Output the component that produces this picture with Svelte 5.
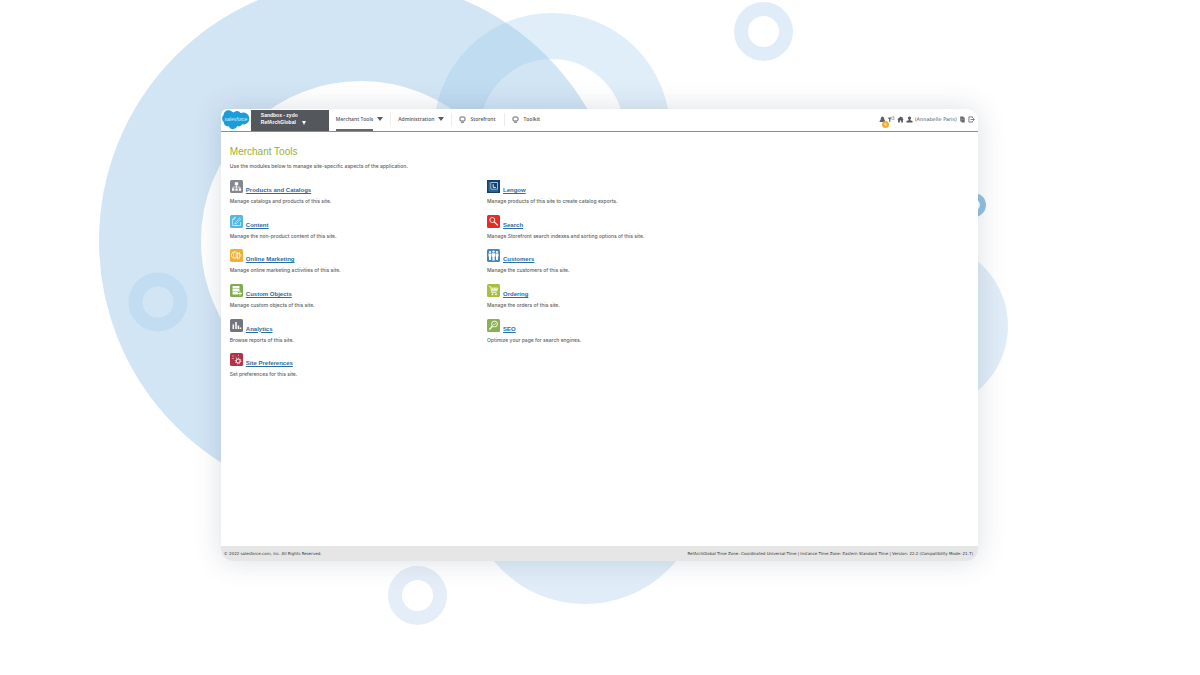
<script>
  const modules = [
    { name: 'Products and Catalogs', text: 'Manage catalogs and products of this site.', icon: 'catalog', color: '#85868f' },
    { name: 'Lengow', text: 'Manage products of this site to create catalog exports.', icon: 'lengow', color: '#173f6b' },
    { name: 'Content', text: 'Manage the non-product content of this site.', icon: 'content', color: '#55b7e3' },
    { name: 'Search', text: 'Manage Storefront search indexes and sorting options of this site.', icon: 'search', color: '#e52d27' },
    { name: 'Online Marketing', text: 'Manage online marketing activities of this site.', icon: 'marketing', color: '#f0b036' },
    { name: 'Customers', text: 'Manage the customers of this site.', icon: 'customers', color: '#4688bd' },
    { name: 'Custom Objects', text: 'Manage custom objects of this site.', icon: 'objects', color: '#7fae4e' },
    { name: 'Ordering', text: 'Manage the orders of this site.', icon: 'cart', color: '#a9bf3d' },
    { name: 'Analytics', text: 'Browse reports of this site.', icon: 'analytics', color: '#74747f' },
    { name: 'SEO', text: 'Optimize your page for search engines.', icon: 'seo', color: '#8bb04f' },
    { name: 'Site Preferences', text: 'Set preferences for this site.', icon: 'preferences', color: '#b03347' }
  ];
</script>

<div class="stage">
  <svg class="rings" viewBox="0 0 1200 675" preserveAspectRatio="xMidYMid slice" aria-hidden="true">
    <circle cx="361" cy="241" r="211" stroke-width="102" stroke="#d2e5f5" />
    <circle cx="552" cy="131" r="95" stroke-width="46" stroke="#9dcbea" stroke-opacity=".32" />
    <circle cx="763.5" cy="31.5" r="22.5" stroke-width="14" stroke="#e0edf8" />
    <circle cx="158" cy="302" r="22.5" stroke-width="14" stroke="#c2ddf1" />
    <circle cx="417.5" cy="595.5" r="22.5" stroke-width="14" stroke="#e5eef8" />
    <circle cx="585" cy="486" r="95" stroke-width="46" stroke="#e0edf8" />
    <circle cx="924" cy="326" r="68" stroke-width="32" stroke="#e0edf8" />
    <circle cx="974" cy="205" r="9" stroke-width="6" stroke="#94c2e1" />
  </svg>

  <div class="window">
    <header>
      <a class="logo" href="#home" aria-label="salesforce">
        <svg viewBox="0 0 28 20" width="28" height="20">
          <path fill="#1a9dd9" d="M11.6 2.6C13.5.2 17 .3 18.6 3c4-1.8 8.7 1 8.7 5.4 0 4-3.5 6.6-7.2 5.9-.9 1.8-2.9 2.6-4.8 1.8-1.4 3.7-6.7 4.4-8.5.2C3.8 17 1.500 14.500 2 12.200-.3 10.500-.5 7 1.700 5.100 1.200 1.200 6.500-1.300 9.500 1.200c.8.4 1.500.9 2.100 1.400z" />
          <text x="14" y="10.5" text-anchor="middle" fill="#d9f0fb" font-size="5" font-style="italic" font-family="Liberation Sans, sans-serif">salesforce</text>
        </svg>
      </a>
      <button class="site" type="button">
        <span>Sandbox - zydo</span>
        <span class="line">RefArchGlobal <i class="caret small"></i></span>
      </button>
      <nav>
        <button type="button" class="item"><span class="label current">Merchant Tools</span><i class="caret"></i></button>
        <button type="button" class="item"><span class="label">Administration</span><i class="caret"></i></button>
        <a class="item link" href="#storefront">
          <svg viewBox="0 0 7 7" width="7" height="7"><rect x="1" y="1" width="5" height="4" rx="1" fill="none" stroke="#666" /><path d="M2 6.300h3" stroke="#777" /></svg>
          <span class="label">Storefront</span>
        </a>
        <a class="item link" href="#toolkit">
          <svg viewBox="0 0 7 7" width="7" height="7"><rect x="1" y="1" width="5" height="4" rx="1" fill="none" stroke="#666" /><path d="M2 6.300h3" stroke="#777" /></svg>
          <span class="label">Toolkit</span>
        </a>
      </nav>
      <div class="tools">
        <button type="button" class="bell" aria-label="Notifications">
          <svg viewBox="0 0 7 7" width="7" height="7"><path fill="#5c5d66" d="M3.500.4C1.900.8 1.700 2 1.700 3.500L.6 5.200v.7h5.800v-.7L5.300 3.500C5.300 2 5.100.8 3.500.4z" /></svg>
          <span class="badge"><svg viewBox="0 0 7 7" width="7" height="7"><circle cx="3.500" cy="3.500" r="3.500" fill="#f4b02c" /><path d="M3 2v2h2" fill="none" stroke="#fff" stroke-width=".7" /></svg></span>
        </button>
        <button type="button" aria-label="Announcements">
          <svg viewBox="0 0 7 7" width="7" height="7"><path fill="#5c5d66" d="M.3 1.500l2.700 0v1.300h-.6L2.200 6H1.300L1.100 2.800H.3z" /><path d="M3 1.500L5.900.6v3.200L3 2.800" fill="none" stroke="#8b8ca0" stroke-width=".7" /></svg>
        </button>
        <a href="#home" aria-label="Home">
          <svg viewBox="0 0 7 7" width="7" height="7"><path fill="#55565c" d="M3.500.5L.2 3.600h.9v2.900h1.700V4.500h1.400v2h1.700V3.600h.9L5.500 2.300V1h-.8v.6z" /></svg>
        </a>
        <a class="user" href="#profile">
          <svg viewBox="0 0 7 7" width="7" height="7"><circle cx="3.500" cy="2" r="1.600" fill="#55565c" /><path fill="#55565c" d="M2.800 3h1.400v1.200l2.300.8v1.500h-6V5l2.300-.8z" /></svg>
          <span>(Annabelle Paris)</span>
        </a>
        <button type="button" aria-label="Documentation">
          <svg viewBox="0 0 7 7" width="7" height="7"><path fill="#66676d" d="M1.200.6h3.300v.9h1.200v4.900H2.500v-.9H1.200z" /><path d="M2.400 1.800v3.400M3 3.500h2" stroke="#c3c3c8" stroke-width=".4" /></svg>
        </button>
        <button type="button" aria-label="Log out">
          <svg viewBox="0 0 7 7" width="7" height="7"><path d="M4.500 2V.9H.9v5.200h3.600V5M2.500 3.500h3.800M5 2.200l1.400 1.300L5 4.800" fill="none" stroke="#66676d" stroke-width=".8" /></svg>
        </button>
      </div>
    </header>

    <main>
      <h1>Merchant Tools</h1>
      <p class="intro">Use the modules below to manage site-specific aspects of the application.</p>
      <div class="modules">
        {#each modules as m}
          <section>
            <div class="title">
              <svg viewBox="0 0 13 13" width="13" height="13" fill="none" stroke="#fff" aria-hidden="true">
                <rect width="13" height="13" rx={m.icon === 'lengow' ? 0 : 1.500} fill={m.color} stroke="none" />
                {#if m.icon === 'catalog'}
                  <path d="M6.500 5v3M3 9V7h7v2" stroke-width=".7" />
                  <path fill="#fff" stroke="none" d="M4.800 2.300h3.400v3H4.800zM2 8.500h2.300v2.200H2zM5.400 8.500h2.300v2.200H5.400zM8.800 8.500h2.300v2.200H8.800z" />
                {:else if m.icon === 'lengow'}
                  <path d="M2.200 1.500v9.500H11" stroke="#3e9bc9" stroke-width=".8" />
                  <path d="M3.800 2.500h6.700v6.700H3.800z" stroke="#a8d6ec" stroke-width=".9" />
                  <path d="M6.200 4.200v3.200h2.600" stroke-width=".9" />
                {:else if m.icon === 'content'}
                  <path d="M6 2.500H4L2.500 4.500v6h8V7M2.500 4.500H4.500v-2" stroke="#c8ebfa" stroke-width=".8" />
                  <path d="M5 8L9.500 3l1.200 1L6.500 8.600 4.700 9zM4.500 10.500h4" stroke="#e4f6fd" stroke-width=".6" />
                {:else if m.icon === 'search'}
                  <circle cx="5.300" cy="5" r="2.500" stroke-width=".9" />
                  <path d="M7.200 6.900l3.600 3.500" stroke-width="1.200" />
                {:else if m.icon === 'marketing'}
                  <circle cx="4.700" cy="6" r="3.300" stroke-width=".7" />
                  <path d="M4.700 2.700c-1.800 2-1.800 4.600 0 6.600M6 5.200l3.500-1.700v6L6 7.500zM7 8l1 2.500" stroke-width=".7" />
                  <path d="M9.700 5.200c1.600.2 1.600 2.200 0 2.500" stroke-width=".7" />
                {:else if m.icon === 'customers'}
                  <g fill="#fff" stroke="none">
                    <circle cx="3" cy="3" r="1.100" /><circle cx="6.500" cy="2.600" r="1.200" /><circle cx="10" cy="3" r="1.100" />
                    <path d="M1.500 4.500h3v3H4v3.500H2V7.500h-.5zM5 4.200h3v3.500h-.4v3.800H5.400V7.700H5zM8.500 4.500h3v3H11v3.500H9V7.500h-.5z" />
                  </g>
                {:else if m.icon === 'objects'}
                  <rect x="2.500" y="2" width="7" height="2.500" rx=".5" fill="#fff" stroke="none" />
                  <rect x="2.500" y="5" width="7" height="2.500" rx=".5" fill="#fff" stroke="none" />
                  <rect x="2.500" y="8" width="5.500" height="2.500" rx=".5" fill="#fff" stroke="none" />
                  <path d="M10 7.500v4M8 9.500h4" stroke-width="1" />
                {:else if m.icon === 'cart'}
                  <path d="M1.800 2.500h1.700l1.200 6h5M4 4h6.800L9.800 7H4.600M5.800 4v3M7.400 4v3M9 4v3M4.200 5.500h6" stroke-width=".7" />
                  <circle cx="5.500" cy="10.300" r=".9" fill="#fff" stroke="none" /><circle cx="9" cy="10.300" r=".9" fill="#fff" stroke="none" />
                {:else if m.icon === 'analytics'}
                  <path d="M3.300 10V5.500M6 10V3M8.400 10V6.500M10.500 10V8.500" stroke-width="1.500" />
                {:else if m.icon === 'seo'}
                  <circle cx="7.500" cy="5" r="2.900" stroke-width=".9" />
                  <path d="M5.400 7.200L2.300 10.600" stroke-width="1.300" />
                  <path d="M6.300 5l1 1 1.500-2" stroke-width=".7" />
                {:else}
                  <circle cx="8.200" cy="8" r="2" stroke-width="1" />
                  <circle cx="8.200" cy="8" r="2.900" stroke-width=".8" stroke-dasharray="1.100 1.100" />
                  <path d="M3 2.300v1.400M2.300 5.500h1.400M5.500 3.800l.8.800M8 2.300h1" stroke="#f3c6cc" stroke-width=".9" />
                {/if}
              </svg>
              <a href="#{m.icon}">{m.name}</a>
            </div>
            <p>{m.text}</p>
          </section>
        {/each}
      </div>
    </main>

    <footer>
      <span>© 2022 salesforce.com, inc. All Rights Reserved.</span>
      <span>RefArchGlobal Time Zone: Coordinated Universal Time | Instance Time Zone: Eastern Standard Time | Version: 22.2 (Compatibility Mode: 21.7)</span>
    </footer>
  </div>
</div>

<style>
  :global(body) {
    background: #fff;
  }
  .stage {
    box-sizing: border-box;
    min-height: 100vh;
    padding: 109px 18.5% 114px 18.4%;
    display: flex;
    font-family: 'Liberation Sans', Arial, sans-serif;
    white-space: nowrap;
  }
  .rings {
    position: absolute;
    inset: 0;
    width: 100%;
    height: 100%;
    fill: none;
  }
  .window {
    position: relative;
    flex: 1;
    min-width: 0;
    display: flex;
    flex-direction: column;
    background: #fff;
    border-radius: 6px 12px 12px 12px;
    box-shadow: 0 0 28px rgba(40, 60, 90, 0.17);
  }
  svg {
    display: block;
    flex: none;
  }
  button {
    appearance: none;
    border: 0;
    padding: 0;
    margin: 0;
    background: none;
    font: inherit;
    color: inherit;
    cursor: pointer;
  }
  a {
    color: inherit;
    text-decoration: none;
  }
  header {
    display: flex;
    height: 22px;
    border-bottom: 1px solid #8c8c8f;
    font-size: 5px;
    color: #55565a;
  }
  .logo {
    width: 30px;
    padding: 1px 0 0 1px;
    box-sizing: border-box;
  }
  .site {
    width: 78px;
    padding: 2px 10px 5px;
    background: #54575b;
    color: #fff;
    font-weight: 700;
    line-height: 7px;
    text-align: left;
    display: flex;
    flex-direction: column;
    margin-top: 1px;
  }
  .line {
    display: flex;
    align-items: center;
    gap: 6px;
  }
  .caret {
    border: 3px solid transparent;
    border-top: 4px solid #5a5b60;
    border-bottom: 0;
  }
  .caret.small {
    border-width: 4px 2px 0;
    border-top-color: #fff;
  }
  nav {
    display: flex;
    flex: 1;
    height: 20px;
    font-family: 'Open Sans', sans-serif;
    font-weight: 600;
  }
  .item {
    display: flex;
    align-items: center;
    gap: 4px;
    padding: 0 7px;
  }
  .item + .item::before {
    content: '';
    width: 1px;
    height: 13px;
    background: #ececec;
    margin: 0 3px 0 -7px;
  }
  .link {
    padding-right: 9px;
  }
  .label {
    position: relative;
    line-height: 20px;
  }
  .current::after {
    content: '';
    position: absolute;
    inset: auto 0 -2px;
    height: 2px;
    background: #66676c;
  }
  .tools {
    display: flex;
    align-items: center;
    gap: 2px;
    padding-right: 3px;
    height: 20px;
    font-family: 'DejaVu Sans', sans-serif;
    font-size: 5px;
  }
  .user {
    display: flex;
    align-items: center;
    gap: 2px;
  }
  .bell {
    position: relative;
  }
  .badge {
    position: absolute;
    left: 3px;
    top: 5px;
  }
  main {
    flex: 1;
    padding: 14px 9px 20px;
    color: #606060;
    font-size: 5px;
  }
  h1 {
    margin: 0;
    font-size: 10px;
    line-height: 12px;
    font-weight: 400;
    color: #98b22e;
  }
  p {
    margin: 0;
    line-height: 8px;
    font-family: Inter, 'Liberation Sans', sans-serif;
    font-weight: 500;
  }
  .intro {
    margin: 4px 0 10px;
  }
  .modules {
    display: grid;
    grid-template-columns: 34.8% 1fr;
    grid-auto-rows: 1fr;
    min-height: 208px;
  }
  .title {
    display: flex;
    align-items: flex-end;
    gap: 3px;
    margin-bottom: 4px;
  }
  .title a {
    font-size: 6px;
    line-height: 6px;
    font-weight: 700;
    color: #2a6da3;
    text-decoration: underline;
  }
  footer {
    display: flex;
    justify-content: space-between;
    align-items: center;
    height: 15px;
    padding: 0 5px 0 3px;
    background: #e6e6e6;
    border-radius: 0 0 12px 12px;
    color: #333;
    font-family: 'DejaVu Sans', sans-serif;
    font-size: 4px;
  }
</style>
